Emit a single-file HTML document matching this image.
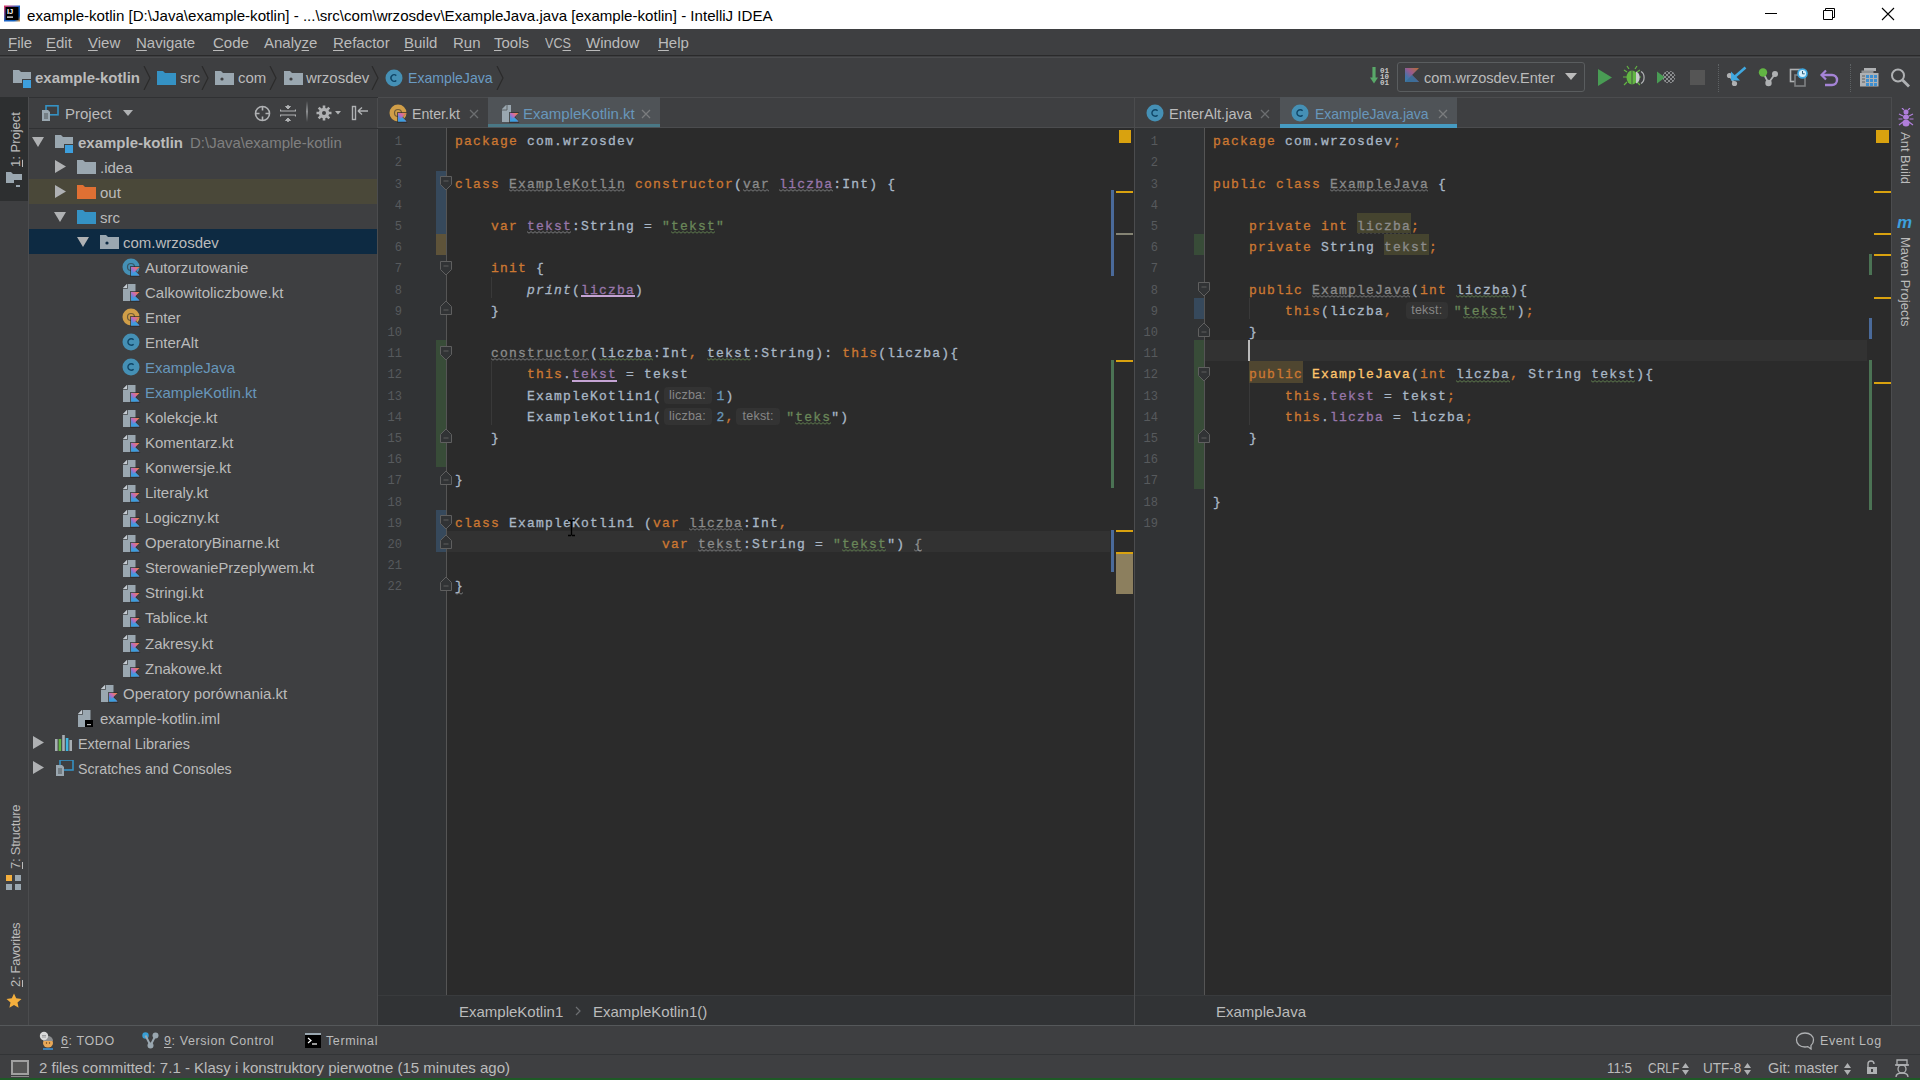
<!DOCTYPE html>
<html><head><meta charset="utf-8">
<style>
*{box-sizing:border-box;margin:0;padding:0}
html,body{width:1920px;height:1080px;overflow:hidden;background:#3E3F41;font-family:"Liberation Sans",sans-serif;font-size:15px;color:#BBBBBB}
.a{position:absolute}
.t{position:absolute;white-space:pre;line-height:15px}
u{text-decoration:underline;text-underline-offset:2px}
#title{left:0;top:0;width:1920px;height:29px;background:#fff}
#menu{left:0;top:29px;width:1920px;height:27px;background:#3E3F41;border-bottom:1px solid #2A2A2B}
.mi{top:6px;color:#BBBBBB}
#nav{left:0;top:56px;width:1920px;height:41px;background:#3E3F41;border-top:1px solid #3E3F41}
#lstrip{left:0;top:97px;width:29px;height:928px;background:#3E3F41;border-right:1px solid #4B4C4E}
#proj{left:29px;top:97px;width:349px;height:928px;background:#3E3F41;border-right:1px solid #4B4C4E}
#ed1{left:378px;top:97px;width:756px;height:928px;background:#2B2B2B}
#ed2{left:1134px;top:97px;width:757px;height:928px;background:#2B2B2B}
#rstrip{left:1891px;top:97px;width:29px;height:928px;background:#3E3F41;border-left:1px solid #4B4C4E}
#bbar{left:0;top:1025px;width:1920px;height:29px;background:#3E3F41;border-top:1px solid #55585A}
.bt{top:8px;font-size:12.5px;letter-spacing:0.6px}
#sbar{left:0;top:1054px;width:1920px;height:26px;background:#3E3F41;border-top:1px solid #323436}
.st{top:5px}
.ln{position:absolute;left:0;text-align:right;font-family:"Liberation Mono",monospace;font-size:12px;line-height:21.2px;padding-top:4px;color:#575A5D}
.cl{position:absolute;white-space:pre;font-family:"Liberation Mono",monospace;font-size:13px;letter-spacing:1.2px;line-height:21.2px;padding-top:3px;color:#A9B7C6;-webkit-text-stroke:0.3px}
.k{color:#CC7832}.d{color:#A9B7C6}.p{color:#9876AA}.s{color:#6A8759}.n{color:#6897BB}.g{color:#8C8C8C}.y{color:#FFC66D}
.it{font-style:italic}
.hint{display:inline-block;height:17px;line-height:17px;vertical-align:1px;border-radius:4px;background:#333333;color:#878787;font-family:"Liberation Sans",sans-serif;font-size:12.5px;text-align:center;letter-spacing:0.2px;-webkit-text-stroke:0}
</style></head><body>
<svg width="0" height="0" style="position:absolute"><defs><linearGradient id="kg" x1="1" y1="0" x2="0" y2="1"><stop offset="0" stop-color="#F88A2C"/><stop offset="0.45" stop-color="#C769B8"/><stop offset="0.75" stop-color="#4C8FE0"/><stop offset="1" stop-color="#3D9FDD"/></linearGradient></defs></svg>
<!-- TITLE BAR -->
<div id="title" class="a">
 <svg class="a" style="left:4px;top:5px" width="16" height="17" viewBox="0 0 16 17">
  <defs><linearGradient id="ijg" x1="0" y1="0" x2="1" y2="1"><stop offset="0" stop-color="#E8325F"/><stop offset="0.5" stop-color="#1C63C7"/><stop offset="0.8" stop-color="#0D5CB8"/><stop offset="1" stop-color="#F0962A"/></linearGradient></defs>
  <rect x="0" y="0.5" width="16" height="16" fill="url(#ijg)"/>
  <rect x="1.5" y="2" width="13" height="13" fill="#000"/>
  <text x="3" y="9" font-family="Liberation Sans" font-weight="bold" font-size="7.5" fill="#fff">IJ</text>
  <rect x="3" y="11.5" width="6" height="1.2" fill="#fff"/>
 </svg>
 <div class="t" style="left:27px;top:8px;font-size:15px;color:#000;transform-origin:0 0;transform:scaleX(1.006)">example-kotlin [D:\Java\example-kotlin] - ...\src\com\wrzosdev\ExampleJava.java [example-kotlin] - IntelliJ IDEA</div>
 <div class="a" style="left:1765px;top:13px;width:12px;height:1px;background:#000"></div>
 <svg class="a" style="left:1822px;top:7px" width="14" height="14" viewBox="0 0 14 14"><path d="M3.5 3.5V1.5h9v9h-2M1.5 3.5h9v9h-9z" fill="none" stroke="#000" stroke-width="1"/></svg>
 <svg class="a" style="left:1881px;top:7px" width="14" height="14" viewBox="0 0 14 14"><path d="M1 1L13 13M13 1L1 13" stroke="#000" stroke-width="1.1"/></svg>
</div>
<!-- MENU -->
<div id="menu" class="a">
 <div class="t mi" style="left:8px"><u>F</u>ile</div>
 <div class="t mi" style="left:46px"><u>E</u>dit</div>
 <div class="t mi" style="left:88px"><u>V</u>iew</div>
 <div class="t mi" style="left:136px"><u>N</u>avigate</div>
 <div class="t mi" style="left:213px"><u>C</u>ode</div>
 <div class="t mi" style="left:264px">Analy<u>z</u>e</div>
 <div class="t mi" style="left:333px"><u>R</u>efactor</div>
 <div class="t mi" style="left:404px"><u>B</u>uild</div>
 <div class="t mi" style="left:453px">R<u>u</u>n</div>
 <div class="t mi" style="left:494px"><u>T</u>ools</div>
 <div class="t mi" style="left:545px;transform-origin:0 0;transform:scaleX(0.84)">VC<u>S</u></div>
 <div class="t mi" style="left:586px"><u>W</u>indow</div>
 <div class="t mi" style="left:658px"><u>H</u>elp</div>
</div>
<!-- NAV BAR -->
<div id="nav" class="a">
 <div class="a" style="left:0;top:0;width:1920px;height:1px;background:#4B4C4E"></div>
 <svg class="a" style="left:13px;top:13px" width="20" height="19" viewBox="0 0 20 19"><path d="M0 0h6l2 2h10v11H0z" fill="#9AA7B0"/><rect x="9" y="9" width="9" height="9" fill="#3E3F41"/><rect x="10" y="10" width="8" height="8" fill="#3D9FDD"/></svg>
 <div class="t" style="left:35px;top:13px;font-weight:bold;color:#BBBBBB">example-kotlin</div>
 <svg class="a chev" style="left:143px;top:9px" width="8" height="24" viewBox="0 0 8 24"><path d="M1 0L7 12L1 24" fill="none" stroke="#2B2B2B" stroke-width="1.2"/></svg>
 <svg class="a" style="left:157px;top:14px" width="19" height="14" viewBox="0 0 19 14"><path d="M0 0h6l2 2h11v12H0z" fill="#3592C4"/></svg>
 <div class="t" style="left:180px;top:13px">src</div>
 <svg class="a chev" style="left:201px;top:9px" width="8" height="24" viewBox="0 0 8 24"><path d="M1 0L7 12L1 24" fill="none" stroke="#2B2B2B" stroke-width="1.2"/></svg>
 <svg class="a" style="left:215px;top:14px" width="19" height="14" viewBox="0 0 19 14"><path d="M0 0h6l2 2h11v12H0z" fill="#9AA7B0"/><circle cx="7" cy="8" r="1.6" fill="#3E3F41"/></svg>
 <div class="t" style="left:238px;top:13px">com</div>
 <svg class="a chev" style="left:269px;top:9px" width="8" height="24" viewBox="0 0 8 24"><path d="M1 0L7 12L1 24" fill="none" stroke="#2B2B2B" stroke-width="1.2"/></svg>
 <svg class="a" style="left:284px;top:14px" width="19" height="14" viewBox="0 0 19 14"><path d="M0 0h6l2 2h11v12H0z" fill="#9AA7B0"/><circle cx="7" cy="8" r="1.6" fill="#3E3F41"/></svg>
 <div class="t" style="left:306px;top:13px">wrzosdev</div>
 <svg class="a chev" style="left:371px;top:9px" width="8" height="24" viewBox="0 0 8 24"><path d="M1 0L7 12L1 24" fill="none" stroke="#2B2B2B" stroke-width="1.2"/></svg>
 <svg class="a" style="left:385px;top:12px" width="18" height="18" viewBox="0 0 18 18"><circle cx="9" cy="9" r="8.5" fill="#4590B5"/><path d="M11.3 6.6A3.2 3.2 0 1 0 11.3 11.4" fill="none" stroke="#0F4566" stroke-width="1.4"/></svg>
 <div class="t" style="left:408px;top:13px;color:#6A9BC3;transform-origin:0 0;transform:scaleX(0.94)">ExampleJava</div>
 <svg class="a chev" style="left:496px;top:9px" width="8" height="24" viewBox="0 0 8 24"><path d="M1 0L7 12L1 24" fill="none" stroke="#2B2B2B" stroke-width="1.2"/></svg>

 <!-- right toolbar -->
 <svg class="a" style="left:1370px;top:10px" width="20" height="20" viewBox="0 0 20 20"><path d="M4 0v12" stroke="#59A869" stroke-width="3.2"/><path d="M0 10.5l4 6 4-6z" fill="#59A869"/><text x="10" y="6" font-family="Liberation Mono" font-size="7.5" fill="#C8C8C8" font-weight="bold">01</text><text x="10" y="12.2" font-family="Liberation Mono" font-size="7.5" fill="#C8C8C8" font-weight="bold">10</text><text x="10" y="18.4" font-family="Liberation Mono" font-size="7.5" fill="#C8C8C8" font-weight="bold">01</text></svg>
 <div class="a" style="left:1397px;top:5px;width:188px;height:30px;border:1px solid #5A5D5F;border-radius:3px;background:#3E3F41"></div>
 <svg class="a" style="left:1405px;top:11px" width="15" height="15" viewBox="0 0 15 15"><path d="M0 0h14L7 7 14 14H0z" fill="url(#kg)" opacity=".65"/><path d="M0 14L7 7l7 7z" fill="#3A6E98" opacity=".9"/></svg>
 <div class="t" style="left:1424px;top:13px;transform-origin:0 0;transform:scaleX(0.97)">com.wrzosdev.Enter</div>
 <svg class="a" style="left:1565px;top:16px" width="12" height="8" viewBox="0 0 12 8"><path d="M0 0h12L6 7z" fill="#BBBBBB"/></svg>
 <svg class="a" style="left:1590px;top:3px" width="128" height="32" viewBox="1590 60 128 32">
 <path d="M1598 69L1612 77.5L1598 86z" fill="#499C54"/>
 <g stroke="#62B543" stroke-width="1.2" fill="none"><path d="M1627 72l-3-2M1627 77h-4M1627 82l-3 3M1637 72l3-2M1637 77h4M1637 82l3 3M1629 69l-2-3M1635 69l2-3"/></g>
 <ellipse cx="1632" cy="77.5" rx="5.5" ry="7" fill="#62B543"/>
 <path d="M1632 70.5v14" stroke="#3E3F41" stroke-width="0.8"/>
 <path d="M1636 71.5a6 6.5 0 0 1 0 12" fill="#C7CACC"/>
 <path d="M1641 71.5a5 6.5 0 0 1 0 12" fill="none" stroke="#AFB1B3" stroke-width="1.2"/>
 <path d="M1657 71.5L1665 77.5L1657 83.5z" fill="#499C54"/>
 <clipPath id="cvc"><circle cx="1669" cy="77" r="6.3"/></clipPath>
 <g clip-path="url(#cvc)" stroke="#8C8E90" stroke-width="1"><path d="M1660 68l18 18M1660 72l14 14M1660 76l10 10M1664 68l14 14M1668 68l10 10M1678 68l-18 18M1678 72l-14 14M1678 76l-10 10M1674 68l-14 14M1670 68l-10 10"/></g>
 <rect x="1690" y="70" width="15" height="15" fill="#555555"/>
</svg>
<div class="a" style="left:1718px;top:7px;width:1px;height:28px;border-left:1px dotted #5E6264"></div>
 <svg class="a" style="left:1722px;top:3px" width="126" height="32" viewBox="1722 60 126 32">
 <path d="M1729.5 75.5l5 8" stroke="#AFB1B3" stroke-width="1.6"/>
 <circle cx="1729.5" cy="75.5" r="2.6" fill="#AFB1B3"/><circle cx="1734.5" cy="83.5" r="2.6" fill="#AFB1B3"/>
 <path d="M1745.5 67.5L1734.5 77" stroke="#40A8E0" stroke-width="2.6"/>
 <path d="M1731 71.5v9h9z" fill="#40A8E0"/>
 <path d="M1763 72.5l5.5 10.5l6.5-9" stroke="#AFB1B3" stroke-width="1.8" fill="none"/>
 <circle cx="1763" cy="72.5" r="4.2" fill="#62B543"/><circle cx="1775" cy="74" r="3" fill="#AFB1B3"/><circle cx="1768.5" cy="83" r="3.2" fill="#AFB1B3"/>
 <rect x="1790.5" y="69.5" width="9.5" height="12" fill="none" stroke="#AFB1B3" stroke-width="1.6"/>
 <rect x="1795" y="75" width="10" height="11" fill="#3E3F41" stroke="#7F8183" stroke-width="1.6"/>
 <circle cx="1802.5" cy="73.5" r="5.3" fill="#40A8E0"/><circle cx="1802.5" cy="73.5" r="3.6" fill="#D6EEFA"/><path d="M1802.5 71v2.8h2.2" stroke="#2B5D7C" stroke-width="1" fill="none"/>
 <path d="M1826 70.5l-4.5 4.5 4.5 4.5" fill="none" stroke="#A584D6" stroke-width="2.2"/>
 <path d="M1822.5 75h9.5a5 5 0 0 1 0 10h-7" fill="none" stroke="#A584D6" stroke-width="2.4"/>
</svg>
<div class="a" style="left:1850px;top:7px;width:1px;height:28px;border-left:1px dotted #5E6264"></div>
 <svg class="a" style="left:1856px;top:3px" width="60" height="32" viewBox="1856 60 60 32">
 <rect x="1864" y="68" width="12" height="3" fill="#AFB1B3"/><rect x="1861.5" y="70.5" width="12" height="3" fill="#8F9193"/>
 <rect x="1860" y="73" width="18.5" height="13.5" fill="#AFB1B3"/>
 <g fill="#3D8FD1"><rect x="1866" y="75" width="3" height="3"/><rect x="1870" y="75" width="3" height="3"/><rect x="1874" y="75" width="3" height="3"/><rect x="1866" y="79" width="3" height="3"/><rect x="1870" y="79" width="3" height="3"/><rect x="1874" y="79" width="3" height="3"/><rect x="1866" y="83" width="3" height="3"/><rect x="1870" y="83" width="3" height="3"/><rect x="1874" y="83" width="3" height="3"/></g>
 <path d="M1862 76h3M1862 79h3M1862 82h3" stroke="#5E6062" stroke-width="1"/>
 <circle cx="1898" cy="75.5" r="6" fill="none" stroke="#AFB1B3" stroke-width="2"/><path d="M1902.5 80L1909 86.5" stroke="#AFB1B3" stroke-width="2.8"/>
</svg>
</div>

<div id="proj" class="a">
<div class="a" style="left:0;top:0;width:349px;height:32px;border-top:1px solid #303133;border-bottom:1px solid #303133"></div>
<svg class="a" style="left:12px;top:8px" width="18" height="16" viewBox="0 0 18 16"><rect x="5" y="0.8" width="12" height="9" fill="none" stroke="#3592C4" stroke-width="1.6"/><path d="M1 5h6l2 2v9H1z" fill="#9AA7B0"/><path d="M3 9h4M3 11h4M3 13h4" stroke="#3E3F41" stroke-width=".8"/></svg>
<div class="t" style="left:36px;top:9px">Project</div>
<svg class="a" style="left:94px;top:13px" width="10" height="7" viewBox="0 0 10 7"><path d="M0 0h10L5 6z" fill="#AFB1B3"/></svg>
<svg class="a" style="left:225px;top:8px" width="17" height="17" viewBox="0 0 17 17"><circle cx="8.5" cy="8.5" r="7" fill="none" stroke="#AFB1B3" stroke-width="1.6"/><path d="M8.5 1.5v4M8.5 11.5v4M1.5 8.5h4M11.5 8.5h4" stroke="#AFB1B3" stroke-width="1.6"/></svg>
<svg class="a" style="left:251px;top:8px" width="16" height="17" viewBox="0 0 16 17"><path d="M0.5 4.5v1.5h15V4.5M0.5 11.5V10h15v1.5" fill="none" stroke="#AFB1B3" stroke-width="1.2"/><path d="M8 0v3.5M8 17v-3.5" stroke="#AFB1B3" stroke-width="1.6"/><path d="M5.5 1.5L8 4l2.5-2.5zM5.5 15.5L8 13l2.5 2.5z" fill="#AFB1B3" stroke="#AFB1B3" stroke-width="1"/></svg>
<div class="a" style="left:277px;top:4px;width:2px;height:21px;background:linear-gradient(#3E3F41,#8C8E90,#3E3F41)"></div>
<svg class="a" style="left:287px;top:7px" width="25" height="18" viewBox="0 0 25 18"><g transform="translate(8 9)"><circle r="5.2" fill="#AFB1B3"/><g stroke="#AFB1B3" stroke-width="2.6"><path d="M0-7.5v15M-7.5 0h15M-5.3-5.3l10.6 10.6M5.3-5.3l-10.6 10.6"/></g><circle r="2" fill="#3E3F41"/></g><path d="M19 7h6l-3 3.5z" fill="#AFB1B3"/></svg>
<svg class="a" style="left:322px;top:8px" width="18" height="16" viewBox="0 0 18 16"><rect x="1.5" y="1.5" width="3" height="13" fill="none" stroke="#AFB1B3" stroke-width="1.4"/><path d="M7 6h10M7 6l4-3.5M7 6l4 3.5" fill="none" stroke="#AFB1B3" stroke-width="1.4"/></svg>
<svg class="a" style="left:3px;top:40.0px" width="12" height="10" viewBox="0 0 12 10"><path d="M0 0h12L6 10z" fill="#AFB1B3"/></svg>
<svg class="a" style="left:26px;top:38.0px" width="20" height="19" viewBox="0 0 20 19"><path d="M0 0h6l2 2h10v11H0z" fill="#9AA7B0"/><rect x="9" y="9" width="9" height="9" fill="#3E3F41"/><rect x="10" y="10" width="8" height="8" fill="#3D9FDD"/></svg>
<div class="t" style="left:49px;top:37.50px;font-weight:bold;color:#BBBBBB">example-kotlin</div>
<div class="t" style="left:161px;top:37.50px;color:#808080">D:\Java\example-kotlin</div>
<svg class="a" style="left:26px;top:62.55px" width="11" height="13" viewBox="0 0 11 13"><path d="M0 0L11 6.5L0 13z" fill="#AFB1B3"/></svg>
<svg class="a" style="left:48px;top:63.05000000000001px" width="19" height="14" viewBox="0 0 19 14"><path d="M0 0h6l2 2h11v12H0z" fill="#9AA7B0"/></svg>
<div class="t" style="left:71px;top:62.55px;color:#BBBBBB">.idea</div>
<div class="a" style="left:0;top:82.1px;width:348px;height:25px;background:#4A4839"></div>
<svg class="a" style="left:26px;top:87.60px" width="11" height="13" viewBox="0 0 11 13"><path d="M0 0L11 6.5L0 13z" fill="#AFB1B3"/></svg>
<svg class="a" style="left:48px;top:88.1px" width="19" height="14" viewBox="0 0 19 14"><path d="M0 0h6l2 2h11v12H0z" fill="#E07033"/></svg>
<div class="t" style="left:71px;top:87.60px;color:#BBBBBB">out</div>
<svg class="a" style="left:25px;top:115.15px" width="12" height="10" viewBox="0 0 12 10"><path d="M0 0h12L6 10z" fill="#AFB1B3"/></svg>
<svg class="a" style="left:48px;top:113.15px" width="19" height="14" viewBox="0 0 19 14"><path d="M0 0h6l2 2h11v12H0z" fill="#3592C4"/></svg>
<div class="t" style="left:71px;top:112.65px;color:#BBBBBB">src</div>
<div class="a" style="left:0;top:132.2px;width:348px;height:25px;background:#0D2A42"></div>
<svg class="a" style="left:48px;top:140.2px" width="12" height="10" viewBox="0 0 12 10"><path d="M0 0h12L6 10z" fill="#AFB1B3"/></svg>
<svg class="a" style="left:71px;top:138.2px" width="19" height="14" viewBox="0 0 19 14"><path d="M0 0h6l2 2h11v12H0z" fill="#9AA7B0"/><circle cx="7" cy="8" r="1.6" fill="#0D2A42"/></svg>
<div class="t" style="left:94px;top:137.70px;color:#BBBBBB">com.wrzosdev</div>
<svg class="a" style="left:93px;top:161.25px" width="19" height="19" viewBox="0 0 19 19"><circle cx="9" cy="9" r="8.5" fill="#4590B5"/><circle cx="9" cy="9" r="3.5" fill="none" stroke="#2E2E2E" stroke-width="1.2" opacity=".6"/><path d="M8 8h10.5L14 12.5 18.5 19H8z" fill="#2B2B2B" opacity=".7"/><path d="M9 9h8.5l-4.3 4.2 4.3 4.3H9z" fill="url(#kg)"/><path d="M9 17.5l4.2-4.3 4.3 4.3z" fill="#3D9FDD"/></svg>
<div class="t" style="left:116px;top:162.75px;color:#BBBBBB">Autorzutowanie</div>
<svg class="a" style="left:93px;top:186.3px" width="19" height="19" viewBox="0 0 19 19"><path d="M1 5L5 1h8.5v17H1z" fill="#9AA7B0"/><path d="M1 5L5 1v4z" fill="#C5CCD2"/><path d="M1 5.5h4.5V1" fill="none" stroke="#3E3F41" stroke-width="0.7"/><path d="M8 8h10.5L14 12.5 18.5 19H8z" fill="#2B2B2B" opacity=".7"/><path d="M9 9h8.5l-4.3 4.2 4.3 4.3H9z" fill="url(#kg)"/><path d="M9 17.5l4.2-4.3 4.3 4.3z" fill="#3D9FDD"/></svg>
<div class="t" style="left:116px;top:187.80px;color:#BBBBBB">Calkowitoliczbowe.kt</div>
<svg class="a" style="left:93px;top:211.35000000000002px" width="19" height="19" viewBox="0 0 19 19"><circle cx="9" cy="9" r="8.5" fill="#D09E48"/><circle cx="9" cy="9" r="3.5" fill="none" stroke="#2E2E2E" stroke-width="1.2" opacity=".6"/><path d="M8 8h10.5L14 12.5 18.5 19H8z" fill="#2B2B2B" opacity=".7"/><path d="M9 9h8.5l-4.3 4.2 4.3 4.3H9z" fill="url(#kg)"/><path d="M9 17.5l4.2-4.3 4.3 4.3z" fill="#3D9FDD"/></svg>
<div class="t" style="left:116px;top:212.85px;color:#BBBBBB">Enter</div>
<svg class="a" style="left:93px;top:236.39999999999998px" width="19" height="19" viewBox="0 0 19 19"><circle cx="9" cy="9" r="8.5" fill="#4590B5"/><path d="M11.6 6.7A3.3 3.3 0 1 0 11.6 11.3" fill="none" stroke="#0F4566" stroke-width="1.4"/></svg>
<div class="t" style="left:116px;top:237.90px;color:#BBBBBB">EnterAlt</div>
<svg class="a" style="left:93px;top:261.45000000000005px" width="19" height="19" viewBox="0 0 19 19"><circle cx="9" cy="9" r="8.5" fill="#4590B5"/><path d="M11.6 6.7A3.3 3.3 0 1 0 11.6 11.3" fill="none" stroke="#0F4566" stroke-width="1.4"/></svg>
<div class="t" style="left:116px;top:262.95px;color:#6897BB">ExampleJava</div>
<svg class="a" style="left:93px;top:286.5px" width="19" height="19" viewBox="0 0 19 19"><path d="M1 5L5 1h8.5v17H1z" fill="#9AA7B0"/><path d="M1 5L5 1v4z" fill="#C5CCD2"/><path d="M1 5.5h4.5V1" fill="none" stroke="#3E3F41" stroke-width="0.7"/><path d="M8 8h10.5L14 12.5 18.5 19H8z" fill="#2B2B2B" opacity=".7"/><path d="M9 9h8.5l-4.3 4.2 4.3 4.3H9z" fill="url(#kg)"/><path d="M9 17.5l4.2-4.3 4.3 4.3z" fill="#3D9FDD"/></svg>
<div class="t" style="left:116px;top:288.00px;color:#6897BB">ExampleKotlin.kt</div>
<svg class="a" style="left:93px;top:311.55px" width="19" height="19" viewBox="0 0 19 19"><path d="M1 5L5 1h8.5v17H1z" fill="#9AA7B0"/><path d="M1 5L5 1v4z" fill="#C5CCD2"/><path d="M1 5.5h4.5V1" fill="none" stroke="#3E3F41" stroke-width="0.7"/><path d="M8 8h10.5L14 12.5 18.5 19H8z" fill="#2B2B2B" opacity=".7"/><path d="M9 9h8.5l-4.3 4.2 4.3 4.3H9z" fill="url(#kg)"/><path d="M9 17.5l4.2-4.3 4.3 4.3z" fill="#3D9FDD"/></svg>
<div class="t" style="left:116px;top:313.05px;color:#BBBBBB">Kolekcje.kt</div>
<svg class="a" style="left:93px;top:336.6px" width="19" height="19" viewBox="0 0 19 19"><path d="M1 5L5 1h8.5v17H1z" fill="#9AA7B0"/><path d="M1 5L5 1v4z" fill="#C5CCD2"/><path d="M1 5.5h4.5V1" fill="none" stroke="#3E3F41" stroke-width="0.7"/><path d="M8 8h10.5L14 12.5 18.5 19H8z" fill="#2B2B2B" opacity=".7"/><path d="M9 9h8.5l-4.3 4.2 4.3 4.3H9z" fill="url(#kg)"/><path d="M9 17.5l4.2-4.3 4.3 4.3z" fill="#3D9FDD"/></svg>
<div class="t" style="left:116px;top:338.10px;color:#BBBBBB">Komentarz.kt</div>
<svg class="a" style="left:93px;top:361.65000000000003px" width="19" height="19" viewBox="0 0 19 19"><path d="M1 5L5 1h8.5v17H1z" fill="#9AA7B0"/><path d="M1 5L5 1v4z" fill="#C5CCD2"/><path d="M1 5.5h4.5V1" fill="none" stroke="#3E3F41" stroke-width="0.7"/><path d="M8 8h10.5L14 12.5 18.5 19H8z" fill="#2B2B2B" opacity=".7"/><path d="M9 9h8.5l-4.3 4.2 4.3 4.3H9z" fill="url(#kg)"/><path d="M9 17.5l4.2-4.3 4.3 4.3z" fill="#3D9FDD"/></svg>
<div class="t" style="left:116px;top:363.15px;color:#BBBBBB">Konwersje.kt</div>
<svg class="a" style="left:93px;top:386.7px" width="19" height="19" viewBox="0 0 19 19"><path d="M1 5L5 1h8.5v17H1z" fill="#9AA7B0"/><path d="M1 5L5 1v4z" fill="#C5CCD2"/><path d="M1 5.5h4.5V1" fill="none" stroke="#3E3F41" stroke-width="0.7"/><path d="M8 8h10.5L14 12.5 18.5 19H8z" fill="#2B2B2B" opacity=".7"/><path d="M9 9h8.5l-4.3 4.2 4.3 4.3H9z" fill="url(#kg)"/><path d="M9 17.5l4.2-4.3 4.3 4.3z" fill="#3D9FDD"/></svg>
<div class="t" style="left:116px;top:388.20px;color:#BBBBBB">Literaly.kt</div>
<svg class="a" style="left:93px;top:411.75px" width="19" height="19" viewBox="0 0 19 19"><path d="M1 5L5 1h8.5v17H1z" fill="#9AA7B0"/><path d="M1 5L5 1v4z" fill="#C5CCD2"/><path d="M1 5.5h4.5V1" fill="none" stroke="#3E3F41" stroke-width="0.7"/><path d="M8 8h10.5L14 12.5 18.5 19H8z" fill="#2B2B2B" opacity=".7"/><path d="M9 9h8.5l-4.3 4.2 4.3 4.3H9z" fill="url(#kg)"/><path d="M9 17.5l4.2-4.3 4.3 4.3z" fill="#3D9FDD"/></svg>
<div class="t" style="left:116px;top:413.25px;color:#BBBBBB">Logiczny.kt</div>
<svg class="a" style="left:93px;top:436.79999999999995px" width="19" height="19" viewBox="0 0 19 19"><path d="M1 5L5 1h8.5v17H1z" fill="#9AA7B0"/><path d="M1 5L5 1v4z" fill="#C5CCD2"/><path d="M1 5.5h4.5V1" fill="none" stroke="#3E3F41" stroke-width="0.7"/><path d="M8 8h10.5L14 12.5 18.5 19H8z" fill="#2B2B2B" opacity=".7"/><path d="M9 9h8.5l-4.3 4.2 4.3 4.3H9z" fill="url(#kg)"/><path d="M9 17.5l4.2-4.3 4.3 4.3z" fill="#3D9FDD"/></svg>
<div class="t" style="left:116px;top:438.30px;color:#BBBBBB">OperatoryBinarne.kt</div>
<svg class="a" style="left:93px;top:461.85px" width="19" height="19" viewBox="0 0 19 19"><path d="M1 5L5 1h8.5v17H1z" fill="#9AA7B0"/><path d="M1 5L5 1v4z" fill="#C5CCD2"/><path d="M1 5.5h4.5V1" fill="none" stroke="#3E3F41" stroke-width="0.7"/><path d="M8 8h10.5L14 12.5 18.5 19H8z" fill="#2B2B2B" opacity=".7"/><path d="M9 9h8.5l-4.3 4.2 4.3 4.3H9z" fill="url(#kg)"/><path d="M9 17.5l4.2-4.3 4.3 4.3z" fill="#3D9FDD"/></svg>
<div class="t" style="left:116px;top:463.35px;color:#BBBBBB;transform-origin:0 0;transform:scaleX(0.98)">SterowaniePrzeplywem.kt</div>
<svg class="a" style="left:93px;top:486.9000000000001px" width="19" height="19" viewBox="0 0 19 19"><path d="M1 5L5 1h8.5v17H1z" fill="#9AA7B0"/><path d="M1 5L5 1v4z" fill="#C5CCD2"/><path d="M1 5.5h4.5V1" fill="none" stroke="#3E3F41" stroke-width="0.7"/><path d="M8 8h10.5L14 12.5 18.5 19H8z" fill="#2B2B2B" opacity=".7"/><path d="M9 9h8.5l-4.3 4.2 4.3 4.3H9z" fill="url(#kg)"/><path d="M9 17.5l4.2-4.3 4.3 4.3z" fill="#3D9FDD"/></svg>
<div class="t" style="left:116px;top:488.40px;color:#BBBBBB">Stringi.kt</div>
<svg class="a" style="left:93px;top:511.95000000000005px" width="19" height="19" viewBox="0 0 19 19"><path d="M1 5L5 1h8.5v17H1z" fill="#9AA7B0"/><path d="M1 5L5 1v4z" fill="#C5CCD2"/><path d="M1 5.5h4.5V1" fill="none" stroke="#3E3F41" stroke-width="0.7"/><path d="M8 8h10.5L14 12.5 18.5 19H8z" fill="#2B2B2B" opacity=".7"/><path d="M9 9h8.5l-4.3 4.2 4.3 4.3H9z" fill="url(#kg)"/><path d="M9 17.5l4.2-4.3 4.3 4.3z" fill="#3D9FDD"/></svg>
<div class="t" style="left:116px;top:513.45px;color:#BBBBBB">Tablice.kt</div>
<svg class="a" style="left:93px;top:537.0px" width="19" height="19" viewBox="0 0 19 19"><path d="M1 5L5 1h8.5v17H1z" fill="#9AA7B0"/><path d="M1 5L5 1v4z" fill="#C5CCD2"/><path d="M1 5.5h4.5V1" fill="none" stroke="#3E3F41" stroke-width="0.7"/><path d="M8 8h10.5L14 12.5 18.5 19H8z" fill="#2B2B2B" opacity=".7"/><path d="M9 9h8.5l-4.3 4.2 4.3 4.3H9z" fill="url(#kg)"/><path d="M9 17.5l4.2-4.3 4.3 4.3z" fill="#3D9FDD"/></svg>
<div class="t" style="left:116px;top:538.50px;color:#BBBBBB">Zakresy.kt</div>
<svg class="a" style="left:93px;top:562.0500000000001px" width="19" height="19" viewBox="0 0 19 19"><path d="M1 5L5 1h8.5v17H1z" fill="#9AA7B0"/><path d="M1 5L5 1v4z" fill="#C5CCD2"/><path d="M1 5.5h4.5V1" fill="none" stroke="#3E3F41" stroke-width="0.7"/><path d="M8 8h10.5L14 12.5 18.5 19H8z" fill="#2B2B2B" opacity=".7"/><path d="M9 9h8.5l-4.3 4.2 4.3 4.3H9z" fill="url(#kg)"/><path d="M9 17.5l4.2-4.3 4.3 4.3z" fill="#3D9FDD"/></svg>
<div class="t" style="left:116px;top:563.55px;color:#BBBBBB">Znakowe.kt</div>
<svg class="a" style="left:71px;top:587.1px" width="19" height="19" viewBox="0 0 19 19"><path d="M1 5L5 1h8.5v17H1z" fill="#9AA7B0"/><path d="M1 5L5 1v4z" fill="#C5CCD2"/><path d="M1 5.5h4.5V1" fill="none" stroke="#3E3F41" stroke-width="0.7"/><path d="M8 8h10.5L14 12.5 18.5 19H8z" fill="#2B2B2B" opacity=".7"/><path d="M9 9h8.5l-4.3 4.2 4.3 4.3H9z" fill="url(#kg)"/><path d="M9 17.5l4.2-4.3 4.3 4.3z" fill="#3D9FDD"/></svg>
<div class="t" style="left:94px;top:588.60px;color:#BBBBBB">Operatory porównania.kt</div>
<svg class="a" style="left:48px;top:612.15px" width="19" height="19" viewBox="0 0 19 19"><path d="M1 5L5 1h8.5v17H1z" fill="#9AA7B0"/><path d="M1 5L5 1v4z" fill="#C5CCD2"/><path d="M1 5.5h4.5V1" fill="none" stroke="#3E3F41" stroke-width="0.7"/><rect x="8" y="11" width="8" height="7" fill="#000"/><rect x="10" y="15" width="4" height="1.2" fill="#BBB"/></svg>
<div class="t" style="left:71px;top:613.65px;color:#BBBBBB">example-kotlin.iml</div>
<svg class="a" style="left:4px;top:638.70px" width="11" height="13" viewBox="0 0 11 13"><path d="M0 0L11 6.5L0 13z" fill="#AFB1B3"/></svg>
<svg class="a" style="left:26px;top:638.2px" width="19" height="16" viewBox="0 0 19 16"><rect x="0" y="4" width="2.6" height="12" fill="#A7AEB3"/><rect x="3.6" y="4" width="2.6" height="12" fill="#62B543"/><rect x="7.2" y="0" width="2.6" height="16" fill="#A7AEB3"/><rect x="10.8" y="3" width="2.6" height="13" fill="#40B6E0"/><rect x="14.4" y="5" width="2.6" height="11" fill="#A7AEB3"/></svg>
<div class="t" style="left:49px;top:638.70px;color:#BBBBBB;transform-origin:0 0;transform:scaleX(0.96)">External Libraries</div>
<svg class="a" style="left:4px;top:663.75px" width="11" height="13" viewBox="0 0 11 13"><path d="M0 0L11 6.5L0 13z" fill="#AFB1B3"/></svg>
<svg class="a" style="left:26px;top:663.25px" width="19" height="16" viewBox="0 0 19 16"><rect x="5" y="0" width="13" height="10" fill="none" stroke="#3592C4" stroke-width="1.6"/><path d="M1 5h6l2 2v9H1z" fill="#9AA7B0"/><path d="M3 9h4M3 11h4M3 13h4" stroke="#3E3F41" stroke-width=".8"/></svg>
<div class="t" style="left:49px;top:663.75px;color:#BBBBBB;transform-origin:0 0;transform:scaleX(0.945)">Scratches and Consoles</div>
</div>
<div id="lstrip" class="a">
<div class="a" style="left:0;top:0;width:28px;height:104px;background:#2D2F30"></div>
<div class="t" style="left:8px;top:70px;transform-origin:0 0;transform:rotate(-90deg);font-size:13px;color:#BBBBBB"><u>1</u>: Project</div>
<svg class="a" style="left:6px;top:75px" width="16" height="16" viewBox="0 0 16 16"><path d="M0 0h5l2 2h9v9H0z" fill="#9AA7B0"/><rect x="8" y="8" width="8" height="8" fill="#2D2F30"/><rect x="10" y="13" width="4" height="2" fill="#9AA7B0"/></svg>
<div class="t" style="left:8px;top:772px;transform-origin:0 0;transform:rotate(-90deg);font-size:13px;letter-spacing:-0.25px;color:#BBBBBB"><u>7</u>: Structure</div>
<svg class="a" style="left:6px;top:778px" width="16" height="15" viewBox="0 0 16 15"><rect x="0" y="0" width="6" height="6" fill="#F4AF3D"/><rect x="9" y="0" width="6" height="6" fill="#9AA7B0"/><rect x="0" y="9" width="6" height="6" fill="#9AA7B0"/><rect x="9" y="9" width="6" height="6" fill="#9AA7B0"/></svg>
<div class="t" style="left:8px;top:890px;transform-origin:0 0;transform:rotate(-90deg);font-size:13px;letter-spacing:-0.3px;color:#BBBBBB"><u>2</u>: Favorites</div>
<svg class="a" style="left:6px;top:896px" width="16" height="16" viewBox="0 0 16 16"><path d="M8 0.5l2.2 4.8 5.3.6-4 3.6 1.1 5.2L8 12l-4.6 2.7 1.1-5.2-4-3.6 5.3-.6z" fill="#F4AF3D"/></svg>
</div>
<div id="ed1" class="a">
<div class="a" style="left:0;top:0;width:756px;height:31px;background:#3E3F41;border-top:1px solid #4B4C4E;border-bottom:1px solid #4B4C4E"></div>
<div class="a" style="left:0;top:31px;width:68px;height:867px;background:#313335"></div>
<div class="a" style="left:68px;top:434.0px;width:664px;height:21.2px;background:#323232"></div>
<div class="a" style="left:68px;top:31px;width:1px;height:867px;background:#555555"></div>
<div class="a" style="left:58px;top:73.6px;width:10px;height:63.6px;background:#36495C"></div>
<div class="a" style="left:58px;top:137.2px;width:10px;height:21.2px;background:#5E5339"></div>
<div class="a" style="left:58px;top:243.2px;width:10px;height:127.2px;background:#384C38"></div>
<div class="a" style="left:58px;top:412.8px;width:10px;height:42.4px;background:#36495C"></div>
<div class="ln" style="top:31.2px;width:24px">1</div>
<div class="ln" style="top:52.4px;width:24px">2</div>
<div class="ln" style="top:73.6px;width:24px">3</div>
<div class="ln" style="top:94.8px;width:24px">4</div>
<div class="ln" style="top:116.0px;width:24px">5</div>
<div class="ln" style="top:137.2px;width:24px">6</div>
<div class="ln" style="top:158.4px;width:24px">7</div>
<div class="ln" style="top:179.6px;width:24px">8</div>
<div class="ln" style="top:200.8px;width:24px">9</div>
<div class="ln" style="top:222.0px;width:24px">10</div>
<div class="ln" style="top:243.2px;width:24px">11</div>
<div class="ln" style="top:264.4px;width:24px">12</div>
<div class="ln" style="top:285.6px;width:24px">13</div>
<div class="ln" style="top:306.8px;width:24px">14</div>
<div class="ln" style="top:328.0px;width:24px">15</div>
<div class="ln" style="top:349.2px;width:24px">16</div>
<div class="ln" style="top:370.4px;width:24px">17</div>
<div class="ln" style="top:391.6px;width:24px">18</div>
<div class="ln" style="top:412.8px;width:24px">19</div>
<div class="ln" style="top:434.0px;width:24px">20</div>
<div class="ln" style="top:455.2px;width:24px">21</div>
<div class="ln" style="top:476.4px;width:24px">22</div>
<div class="a" style="left:113px;top:179.6px;width:1px;height:21.2px;background:#393939"></div>
<div class="a" style="left:113px;top:264.4px;width:1px;height:63.6px;background:#393939"></div>
<svg class="a" style="left:62px;top:79.1px" width="12" height="15" viewBox="0 0 12 15"><path d="M0.5 0.5h11v8l-5.5 5.5-5.5-5.5z" fill="#313335" stroke="#5F5F5F" stroke-width="1"/><path d="M3.5 5h5" stroke="#5F5F5F" stroke-width="1"/></svg>
<svg class="a" style="left:62px;top:163.9px" width="12" height="15" viewBox="0 0 12 15"><path d="M0.5 0.5h11v8l-5.5 5.5-5.5-5.5z" fill="#313335" stroke="#5F5F5F" stroke-width="1"/><path d="M3.5 5h5" stroke="#5F5F5F" stroke-width="1"/></svg>
<svg class="a" style="left:62px;top:203.3px" width="12" height="15" viewBox="0 0 12 15"><path d="M0.5 14.5h11v-8l-5.5-5.5-5.5 5.5z" fill="#313335" stroke="#5F5F5F" stroke-width="1"/><path d="M3.5 10h5" stroke="#5F5F5F" stroke-width="1"/></svg>
<svg class="a" style="left:62px;top:248.7px" width="12" height="15" viewBox="0 0 12 15"><path d="M0.5 0.5h11v8l-5.5 5.5-5.5-5.5z" fill="#313335" stroke="#5F5F5F" stroke-width="1"/><path d="M3.5 5h5" stroke="#5F5F5F" stroke-width="1"/></svg>
<svg class="a" style="left:62px;top:330.5px" width="12" height="15" viewBox="0 0 12 15"><path d="M0.5 14.5h11v-8l-5.5-5.5-5.5 5.5z" fill="#313335" stroke="#5F5F5F" stroke-width="1"/><path d="M3.5 10h5" stroke="#5F5F5F" stroke-width="1"/></svg>
<svg class="a" style="left:62px;top:372.9px" width="12" height="15" viewBox="0 0 12 15"><path d="M0.5 14.5h11v-8l-5.5-5.5-5.5 5.5z" fill="#313335" stroke="#5F5F5F" stroke-width="1"/><path d="M3.5 10h5" stroke="#5F5F5F" stroke-width="1"/></svg>
<svg class="a" style="left:62px;top:418.3px" width="12" height="15" viewBox="0 0 12 15"><path d="M0.5 0.5h11v8l-5.5 5.5-5.5-5.5z" fill="#313335" stroke="#5F5F5F" stroke-width="1"/><path d="M3.5 5h5" stroke="#5F5F5F" stroke-width="1"/></svg>
<svg class="a" style="left:62px;top:436.5px" width="12" height="15" viewBox="0 0 12 15"><path d="M0.5 14.5h11v-8l-5.5-5.5-5.5 5.5z" fill="#313335" stroke="#5F5F5F" stroke-width="1"/><path d="M3.5 10h5" stroke="#5F5F5F" stroke-width="1"/></svg>
<svg class="a" style="left:62px;top:478.9px" width="12" height="15" viewBox="0 0 12 15"><path d="M0.5 14.5h11v-8l-5.5-5.5-5.5 5.5z" fill="#313335" stroke="#5F5F5F" stroke-width="1"/><path d="M3.5 10h5" stroke="#5F5F5F" stroke-width="1"/></svg>
<svg class="a" style="left:131px;top:91.8px" width="118" height="3" viewBox="0 0 118 3"><polyline points="0,0 2,1.6 4,0 6,1.6 8,0 10,1.6 12,0 14,1.6 16,0 18,1.6 20,0 22,1.6 24,0 26,1.6 28,0 30,1.6 32,0 34,1.6 36,0 38,1.6 40,0 42,1.6 44,0 46,1.6 48,0 50,1.6 52,0 54,1.6 56,0 58,1.6 60,0 62,1.6 64,0 66,1.6 68,0 70,1.6 72,0 74,1.6 76,0 78,1.6 80,0 82,1.6 84,0 86,1.6 88,0 90,1.6 92,0 94,1.6 96,0 98,1.6 100,0 102,1.6 104,0 106,1.6 108,0 110,1.6 112,0 114,1.6 116,0" transform="translate(0 .6)" fill="none" stroke="#77787A" stroke-width="1"/></svg>
<svg class="a" style="left:365px;top:91.8px" width="28" height="3" viewBox="0 0 28 3"><polyline points="0,0 2,1.6 4,0 6,1.6 8,0 10,1.6 12,0 14,1.6 16,0 18,1.6 20,0 22,1.6 24,0 26,1.6" transform="translate(0 .6)" fill="none" stroke="#77787A" stroke-width="1"/></svg>
<svg class="a" style="left:401px;top:91.8px" width="55" height="3" viewBox="0 0 55 3"><polyline points="0,0 2,1.6 4,0 6,1.6 8,0 10,1.6 12,0 14,1.6 16,0 18,1.6 20,0 22,1.6 24,0 26,1.6 28,0 30,1.6 32,0 34,1.6 36,0 38,1.6 40,0 42,1.6 44,0 46,1.6 48,0 50,1.6 52,0 54,1.6" transform="translate(0 .6)" fill="none" stroke="#77787A" stroke-width="1"/></svg>
<svg class="a" style="left:149px;top:134.2px" width="46" height="3" viewBox="0 0 46 3"><polyline points="0,0 2,1.6 4,0 6,1.6 8,0 10,1.6 12,0 14,1.6 16,0 18,1.6 20,0 22,1.6 24,0 26,1.6 28,0 30,1.6 32,0 34,1.6 36,0 38,1.6 40,0 42,1.6 44,0" transform="translate(0 .6)" fill="none" stroke="#77787A" stroke-width="1"/></svg>
<svg class="a" style="left:293px;top:134.2px" width="46" height="3" viewBox="0 0 46 3"><polyline points="0,0 2,1.6 4,0 6,1.6 8,0 10,1.6 12,0 14,1.6 16,0 18,1.6 20,0 22,1.6 24,0 26,1.6 28,0 30,1.6 32,0 34,1.6 36,0 38,1.6 40,0 42,1.6 44,0" transform="translate(0 .6)" fill="none" stroke="#5E7A4E" stroke-width="1"/></svg>
<div class="a" style="left:203px;top:198.2px;width:54px;height:2px;background:#C5A4D4"></div>
<svg class="a" style="left:113px;top:261.4px" width="100" height="3" viewBox="0 0 100 3"><polyline points="0,0 2,1.6 4,0 6,1.6 8,0 10,1.6 12,0 14,1.6 16,0 18,1.6 20,0 22,1.6 24,0 26,1.6 28,0 30,1.6 32,0 34,1.6 36,0 38,1.6 40,0 42,1.6 44,0 46,1.6 48,0 50,1.6 52,0 54,1.6 56,0 58,1.6 60,0 62,1.6 64,0 66,1.6 68,0 70,1.6 72,0 74,1.6 76,0 78,1.6 80,0 82,1.6 84,0 86,1.6 88,0 90,1.6 92,0 94,1.6 96,0 98,1.6" transform="translate(0 .6)" fill="none" stroke="#77787A" stroke-width="1"/></svg>
<svg class="a" style="left:221px;top:261.4px" width="55" height="3" viewBox="0 0 55 3"><polyline points="0,0 2,1.6 4,0 6,1.6 8,0 10,1.6 12,0 14,1.6 16,0 18,1.6 20,0 22,1.6 24,0 26,1.6 28,0 30,1.6 32,0 34,1.6 36,0 38,1.6 40,0 42,1.6 44,0 46,1.6 48,0 50,1.6 52,0 54,1.6" transform="translate(0 .6)" fill="none" stroke="#5E7A4E" stroke-width="1"/></svg>
<svg class="a" style="left:329px;top:261.4px" width="46" height="3" viewBox="0 0 46 3"><polyline points="0,0 2,1.6 4,0 6,1.6 8,0 10,1.6 12,0 14,1.6 16,0 18,1.6 20,0 22,1.6 24,0 26,1.6 28,0 30,1.6 32,0 34,1.6 36,0 38,1.6 40,0 42,1.6 44,0" transform="translate(0 .6)" fill="none" stroke="#5E7A4E" stroke-width="1"/></svg>
<div class="a" style="left:194px;top:283.0px;width:45px;height:2px;background:#C5A4D4"></div>
<svg class="a" style="left:417.1px;top:325.0px" width="37" height="3" viewBox="0 0 37 3"><polyline points="0,0 2,1.6 4,0 6,1.6 8,0 10,1.6 12,0 14,1.6 16,0 18,1.6 20,0 22,1.6 24,0 26,1.6 28,0 30,1.6 32,0 34,1.6 36,0" transform="translate(0 .6)" fill="none" stroke="#5E7A4E" stroke-width="1"/></svg>
<svg class="a" style="left:311px;top:431.0px" width="55" height="3" viewBox="0 0 55 3"><polyline points="0,0 2,1.6 4,0 6,1.6 8,0 10,1.6 12,0 14,1.6 16,0 18,1.6 20,0 22,1.6 24,0 26,1.6 28,0 30,1.6 32,0 34,1.6 36,0 38,1.6 40,0 42,1.6 44,0 46,1.6 48,0 50,1.6 52,0 54,1.6" transform="translate(0 .6)" fill="none" stroke="#77787A" stroke-width="1"/></svg>
<svg class="a" style="left:320px;top:452.2px" width="46" height="3" viewBox="0 0 46 3"><polyline points="0,0 2,1.6 4,0 6,1.6 8,0 10,1.6 12,0 14,1.6 16,0 18,1.6 20,0 22,1.6 24,0 26,1.6 28,0 30,1.6 32,0 34,1.6 36,0 38,1.6 40,0 42,1.6 44,0" transform="translate(0 .6)" fill="none" stroke="#77787A" stroke-width="1"/></svg>
<svg class="a" style="left:464px;top:452.2px" width="46" height="3" viewBox="0 0 46 3"><polyline points="0,0 2,1.6 4,0 6,1.6 8,0 10,1.6 12,0 14,1.6 16,0 18,1.6 20,0 22,1.6 24,0 26,1.6 28,0 30,1.6 32,0 34,1.6 36,0 38,1.6 40,0 42,1.6 44,0" transform="translate(0 .6)" fill="none" stroke="#5E7A4E" stroke-width="1"/></svg>
<svg class="a" style="left:536px;top:452.2px" width="10" height="3" viewBox="0 0 10 3"><polyline points="0,0 2,1.6 4,0 6,1.6 8,0" transform="translate(0 .6)" fill="none" stroke="#77787A" stroke-width="1"/></svg>
<svg class="a" style="left:77px;top:494.6px" width="10" height="3" viewBox="0 0 10 3"><polyline points="0,0 2,1.6 4,0 6,1.6 8,0" transform="translate(0 .6)" fill="none" stroke="#77787A" stroke-width="1"/></svg>
<div class="cl" style="left:77px;top:31.2px"><span class="k">package</span><span class="d"> com.wrzosdev</span></div>
<div class="cl" style="left:77px;top:73.6px"><span class="k">class</span><span class="d"> </span><span class="g">ExampleKotlin</span><span class="d"> </span><span class="k">constructor</span><span class="d">(</span><span class="g">var</span><span class="d"> </span><span class="p">liczba</span><span class="d">:Int) {</span></div>
<div class="cl" style="left:77px;top:116.0px"><span class="d">    </span><span class="k">var</span><span class="d"> </span><span class="p">tekst</span><span class="d">:String = </span><span class="s">"</span><span class="s">tekst</span><span class="s">"</span></div>
<div class="cl" style="left:77px;top:158.4px"><span class="d">    </span><span class="k">init</span><span class="d"> {</span></div>
<div class="cl" style="left:77px;top:179.6px"><span class="d">        </span><span class="d it">print</span><span class="d">(</span><span class="p">liczba</span><span class="d">)</span></div>
<div class="cl" style="left:77px;top:200.8px"><span class="d">    }</span></div>
<div class="cl" style="left:77px;top:243.2px"><span class="d">    </span><span class="g">constructor</span><span class="d">(</span><span class="d">liczba</span><span class="d">:Int</span><span class="k">,</span><span class="d"> </span><span class="d">tekst</span><span class="d">:String): </span><span class="k">this</span><span class="d">(liczba){</span></div>
<div class="cl" style="left:77px;top:264.4px"><span class="d">        </span><span class="k">this</span><span class="d">.</span><span class="p">tekst</span><span class="d"> = tekst</span></div>
<div class="cl" style="left:77px;top:285.6px"><span class="d">        ExampleKotlin1(</span><span class="hint" style="margin-left:1.5px;margin-right:5px;width:48px">liczba:</span><span class="n">1</span><span class="d">)</span></div>
<div class="cl" style="left:77px;top:306.8px"><span class="d">        ExampleKotlin1(</span><span class="hint" style="margin-left:1.5px;margin-right:5px;width:48px">liczba:</span><span class="n">2</span><span class="k">,</span><span class="hint" style="margin-left:1.6px;margin-right:6px;width:44px">tekst:</span><span class="s">"</span><span class="s">teks</span><span class="d">")</span></div>
<div class="cl" style="left:77px;top:328.0px"><span class="d">    }</span></div>
<div class="cl" style="left:77px;top:370.4px"><span class="d">}</span></div>
<div class="cl" style="left:77px;top:412.8px"><span class="k">class</span><span class="d"> ExampleKotlin1 (</span><span class="k">var</span><span class="d"> </span><span class="g">liczba</span><span class="d">:Int</span><span class="k">,</span></div>
<div class="cl" style="left:77px;top:434.0px"><span class="d">                       </span><span class="k">var</span><span class="d"> </span><span class="g">tekst</span><span class="d">:String = </span><span class="s">"</span><span class="s">tekst</span><span class="d">") </span><span class="g">{</span></div>
<div class="cl" style="left:77px;top:476.4px"><span class="d">}</span></div>
<div class="a" style="left:741px;top:33px;width:12px;height:13px;background:#D9A20F"></div>
<div class="a" style="left:733px;top:93px;width:3px;height:86px;background:#4A6A9A"></div>
<div class="a" style="left:738px;top:94px;width:17px;height:2px;background:#D9A20F"></div>
<div class="a" style="left:738px;top:136px;width:17px;height:2px;background:#858474"></div>
<div class="a" style="left:733px;top:263px;width:3px;height:128px;background:#4B7354"></div>
<div class="a" style="left:738px;top:263px;width:17px;height:2px;background:#D9A20F"></div>
<div class="a" style="left:733px;top:433px;width:3px;height:42px;background:#4A6A9A"></div>
<div class="a" style="left:738px;top:433px;width:17px;height:2px;background:#D9A20F"></div>
<div class="a" style="left:738px;top:455px;width:17px;height:2px;background:#D9A20F"></div>
<div class="a" style="left:738px;top:457px;width:17px;height:40px;background:#8C7F5E"></div>
<div class="a" style="left:0;top:898px;width:756px;height:30px;background:#313335;border-top:1px solid #393B3D"></div>

<div class="a" style="left:110px;top:0;width:172px;height:31px;background:#4F5357"></div>
<div class="a" style="left:110px;top:27px;width:172px;height:3px;background:#4A7886"></div>
<svg class="a" style="left:11px;top:7px" width="19" height="19" viewBox="0 0 19 19"><circle cx="9" cy="9" r="8.5" fill="#D09E48"/><circle cx="9" cy="9" r="3.5" fill="none" stroke="#2E2E2E" stroke-width="1.2" opacity=".6"/><path d="M8 8h10.5L14 12.5 18.5 19H8z" fill="#2B2B2B" opacity=".7"/><path d="M9 9h8.5l-4.3 4.2 4.3 4.3H9z" fill="url(#kg)"/><path d="M9 17.5l4.2-4.3 4.3 4.3z" fill="#3D9FDD"/></svg>
<div class="t" style="left:34px;top:9px;color:#BBBBBB;transform-origin:0 0;transform:scaleX(0.943)">Enter.kt</div>
<svg class="a cx" style="left:91px;top:12px" width="10" height="10" viewBox="0 0 10 10"><path d="M1 1l8 8M9 1L1 9" stroke="#6C6E70" stroke-width="1.3"/></svg>
<svg class="a" style="left:123px;top:7px" width="19" height="19" viewBox="0 0 19 19"><path d="M1 5L5 1h5v17H1z" fill="#9AA7B0"/><path d="M6 1v5H1" fill="none" stroke="#4E5254" stroke-width="0.8"/><path d="M8 8h10.5L14 12.5 18.5 19H8z" fill="#2B2B2B" opacity=".7"/><path d="M9 9h8.5l-4.3 4.2 4.3 4.3H9z" fill="url(#kg)"/><path d="M9 17.5l4.2-4.3 4.3 4.3z" fill="#3D9FDD"/></svg>
<div class="t" style="left:145px;top:9px;color:#6897BB">ExampleKotlin.kt</div>
<svg class="a cx" style="left:263px;top:12px" width="10" height="10" viewBox="0 0 10 10"><path d="M1 1l8 8M9 1L1 9" stroke="#7A7C7E" stroke-width="1.3"/></svg>
<svg class="a" style="left:189px;top:422px;z-index:3" width="9" height="18" viewBox="0 0 9 18"><path d="M1 1.5h3M5 1.5h3M4.5 1.5v15M1 16.5h3M5 16.5h3" stroke="#000" stroke-width="1.3" fill="none"/></svg>
<div class="t" style="left:81px;top:907px;color:#BBBBBB">ExampleKotlin1</div>
<svg class="a" style="left:197px;top:909px" width="6" height="10" viewBox="0 0 6 10"><path d="M1 1l4 4-4 4" fill="none" stroke="#6E7073" stroke-width="1.2"/></svg>
<div class="t" style="left:215px;top:907px;color:#BBBBBB">ExampleKotlin1()</div>

</div>
<div id="ed2" class="a">
<div class="a" style="left:0;top:0;width:757px;height:31px;background:#3E3F41;border-top:1px solid #4B4C4E;border-bottom:1px solid #4B4C4E"></div>
<div class="a" style="left:0;top:31px;width:70px;height:867px;background:#313335"></div>
<div class="a" style="left:70px;top:243.2px;width:663px;height:21.2px;background:#323232"></div>
<div class="a" style="left:70px;top:31px;width:1px;height:867px;background:#555555"></div>
<div class="a" style="left:60px;top:137.2px;width:10px;height:21.2px;background:#384C38"></div>
<div class="a" style="left:60px;top:200.8px;width:10px;height:21.2px;background:#36495C"></div>
<div class="a" style="left:60px;top:243.2px;width:10px;height:148.4px;background:#384C38"></div>
<div class="ln" style="top:31.2px;width:24px">1</div>
<div class="ln" style="top:52.4px;width:24px">2</div>
<div class="ln" style="top:73.6px;width:24px">3</div>
<div class="ln" style="top:94.8px;width:24px">4</div>
<div class="ln" style="top:116.0px;width:24px">5</div>
<div class="ln" style="top:137.2px;width:24px">6</div>
<div class="ln" style="top:158.4px;width:24px">7</div>
<div class="ln" style="top:179.6px;width:24px">8</div>
<div class="ln" style="top:200.8px;width:24px">9</div>
<div class="ln" style="top:222.0px;width:24px">10</div>
<div class="ln" style="top:243.2px;width:24px">11</div>
<div class="ln" style="top:264.4px;width:24px">12</div>
<div class="ln" style="top:285.6px;width:24px">13</div>
<div class="ln" style="top:306.8px;width:24px">14</div>
<div class="ln" style="top:328.0px;width:24px">15</div>
<div class="ln" style="top:349.2px;width:24px">16</div>
<div class="ln" style="top:370.4px;width:24px">17</div>
<div class="ln" style="top:391.6px;width:24px">18</div>
<div class="ln" style="top:412.8px;width:24px">19</div>
<div class="a" style="left:115px;top:200.8px;width:1px;height:21.2px;background:#393939"></div>
<div class="a" style="left:115px;top:285.6px;width:1px;height:42.4px;background:#393939"></div>
<svg class="a" style="left:64px;top:185.1px" width="12" height="15" viewBox="0 0 12 15"><path d="M0.5 0.5h11v8l-5.5 5.5-5.5-5.5z" fill="#313335" stroke="#5F5F5F" stroke-width="1"/><path d="M3.5 5h5" stroke="#5F5F5F" stroke-width="1"/></svg>
<svg class="a" style="left:64px;top:224.5px" width="12" height="15" viewBox="0 0 12 15"><path d="M0.5 14.5h11v-8l-5.5-5.5-5.5 5.5z" fill="#313335" stroke="#5F5F5F" stroke-width="1"/><path d="M3.5 10h5" stroke="#5F5F5F" stroke-width="1"/></svg>
<svg class="a" style="left:64px;top:269.9px" width="12" height="15" viewBox="0 0 12 15"><path d="M0.5 0.5h11v8l-5.5 5.5-5.5-5.5z" fill="#313335" stroke="#5F5F5F" stroke-width="1"/><path d="M3.5 5h5" stroke="#5F5F5F" stroke-width="1"/></svg>
<svg class="a" style="left:64px;top:330.5px" width="12" height="15" viewBox="0 0 12 15"><path d="M0.5 14.5h11v-8l-5.5-5.5-5.5 5.5z" fill="#313335" stroke="#5F5F5F" stroke-width="1"/><path d="M3.5 10h5" stroke="#5F5F5F" stroke-width="1"/></svg>
<svg class="a" style="left:196px;top:91.8px" width="100" height="3" viewBox="0 0 100 3"><polyline points="0,0 2,1.6 4,0 6,1.6 8,0 10,1.6 12,0 14,1.6 16,0 18,1.6 20,0 22,1.6 24,0 26,1.6 28,0 30,1.6 32,0 34,1.6 36,0 38,1.6 40,0 42,1.6 44,0 46,1.6 48,0 50,1.6 52,0 54,1.6 56,0 58,1.6 60,0 62,1.6 64,0 66,1.6 68,0 70,1.6 72,0 74,1.6 76,0 78,1.6 80,0 82,1.6 84,0 86,1.6 88,0 90,1.6 92,0 94,1.6 96,0 98,1.6" transform="translate(0 .6)" fill="none" stroke="#77787A" stroke-width="1"/></svg>
<svg class="a" style="left:223px;top:134.2px" width="55" height="3" viewBox="0 0 55 3"><polyline points="0,0 2,1.6 4,0 6,1.6 8,0 10,1.6 12,0 14,1.6 16,0 18,1.6 20,0 22,1.6 24,0 26,1.6 28,0 30,1.6 32,0 34,1.6 36,0 38,1.6 40,0 42,1.6 44,0 46,1.6 48,0 50,1.6 52,0 54,1.6" transform="translate(0 .6)" fill="none" stroke="#77787A" stroke-width="1"/></svg>
<div class="a" style="left:223px;top:116.0px;width:54px;height:20.4px;background:#45442F"></div>
<svg class="a" style="left:250px;top:155.4px" width="46" height="3" viewBox="0 0 46 3"><polyline points="0,0 2,1.6 4,0 6,1.6 8,0 10,1.6 12,0 14,1.6 16,0 18,1.6 20,0 22,1.6 24,0 26,1.6 28,0 30,1.6 32,0 34,1.6 36,0 38,1.6 40,0 42,1.6 44,0" transform="translate(0 .6)" fill="none" stroke="#77787A" stroke-width="1"/></svg>
<div class="a" style="left:250px;top:137.2px;width:45px;height:20.4px;background:#45442F"></div>
<svg class="a" style="left:178px;top:197.8px" width="100" height="3" viewBox="0 0 100 3"><polyline points="0,0 2,1.6 4,0 6,1.6 8,0 10,1.6 12,0 14,1.6 16,0 18,1.6 20,0 22,1.6 24,0 26,1.6 28,0 30,1.6 32,0 34,1.6 36,0 38,1.6 40,0 42,1.6 44,0 46,1.6 48,0 50,1.6 52,0 54,1.6 56,0 58,1.6 60,0 62,1.6 64,0 66,1.6 68,0 70,1.6 72,0 74,1.6 76,0 78,1.6 80,0 82,1.6 84,0 86,1.6 88,0 90,1.6 92,0 94,1.6 96,0 98,1.6" transform="translate(0 .6)" fill="none" stroke="#77787A" stroke-width="1"/></svg>
<svg class="a" style="left:322px;top:197.8px" width="55" height="3" viewBox="0 0 55 3"><polyline points="0,0 2,1.6 4,0 6,1.6 8,0 10,1.6 12,0 14,1.6 16,0 18,1.6 20,0 22,1.6 24,0 26,1.6 28,0 30,1.6 32,0 34,1.6 36,0 38,1.6 40,0 42,1.6 44,0 46,1.6 48,0 50,1.6 52,0 54,1.6" transform="translate(0 .6)" fill="none" stroke="#5E7A4E" stroke-width="1"/></svg>
<svg class="a" style="left:328.6px;top:219.0px" width="46" height="3" viewBox="0 0 46 3"><polyline points="0,0 2,1.6 4,0 6,1.6 8,0 10,1.6 12,0 14,1.6 16,0 18,1.6 20,0 22,1.6 24,0 26,1.6 28,0 30,1.6 32,0 34,1.6 36,0 38,1.6 40,0 42,1.6 44,0" transform="translate(0 .6)" fill="none" stroke="#5E7A4E" stroke-width="1"/></svg>
<div class="a" style="left:115px;top:264.4px;width:54px;height:21.2px;background:#4F4630"></div>
<svg class="a" style="left:322px;top:282.6px" width="55" height="3" viewBox="0 0 55 3"><polyline points="0,0 2,1.6 4,0 6,1.6 8,0 10,1.6 12,0 14,1.6 16,0 18,1.6 20,0 22,1.6 24,0 26,1.6 28,0 30,1.6 32,0 34,1.6 36,0 38,1.6 40,0 42,1.6 44,0 46,1.6 48,0 50,1.6 52,0 54,1.6" transform="translate(0 .6)" fill="none" stroke="#5E7A4E" stroke-width="1"/></svg>
<svg class="a" style="left:457px;top:282.6px" width="46" height="3" viewBox="0 0 46 3"><polyline points="0,0 2,1.6 4,0 6,1.6 8,0 10,1.6 12,0 14,1.6 16,0 18,1.6 20,0 22,1.6 24,0 26,1.6 28,0 30,1.6 32,0 34,1.6 36,0 38,1.6 40,0 42,1.6 44,0" transform="translate(0 .6)" fill="none" stroke="#5E7A4E" stroke-width="1"/></svg>
<div class="cl" style="left:79px;top:31.2px"><span class="k">package</span><span class="d"> com.wrzosdev</span><span class="k">;</span></div>
<div class="cl" style="left:79px;top:73.6px"><span class="k">public class</span><span class="d"> </span><span class="g">ExampleJava</span><span class="d"> {</span></div>
<div class="cl" style="left:79px;top:116.0px"><span class="d">    </span><span class="k">private int</span><span class="d"> </span><span class="g">liczba</span><span class="k">;</span></div>
<div class="cl" style="left:79px;top:137.2px"><span class="d">    </span><span class="k">private</span><span class="d"> String </span><span class="g">tekst</span><span class="k">;</span></div>
<div class="cl" style="left:79px;top:179.6px"><span class="d">    </span><span class="k">public</span><span class="d"> </span><span class="g">ExampleJava</span><span class="d">(</span><span class="k">int</span><span class="d"> </span><span class="d">liczba</span><span class="d">){</span></div>
<div class="cl" style="left:79px;top:200.8px"><span class="d">        </span><span class="k">this</span><span class="d">(liczba</span><span class="k">,</span><span class="d"> </span><span class="hint" style="margin-left:3.5px;margin-right:5.6px;width:42.5px">tekst:</span><span class="s">"</span><span class="s">tekst</span><span class="s">"</span><span class="d">)</span><span class="k">;</span></div>
<div class="cl" style="left:79px;top:222.0px"><span class="d">    }</span></div>
<div class="cl" style="left:79px;top:264.4px"><span class="d">    </span><span class="k">public</span><span class="d"> </span><span class="y">ExampleJava</span><span class="d">(</span><span class="k">int</span><span class="d"> </span><span class="d">liczba</span><span class="k">,</span><span class="d"> String </span><span class="d">tekst</span><span class="d">){</span></div>
<div class="cl" style="left:79px;top:285.6px"><span class="d">        </span><span class="k">this</span><span class="d">.</span><span class="p">tekst</span><span class="d"> = tekst</span><span class="k">;</span></div>
<div class="cl" style="left:79px;top:306.8px"><span class="d">        </span><span class="k">this</span><span class="d">.</span><span class="p">liczba</span><span class="d"> = liczba</span><span class="k">;</span></div>
<div class="cl" style="left:79px;top:328.0px"><span class="d">    }</span></div>
<div class="cl" style="left:79px;top:391.6px"><span class="d">}</span></div>
<div class="a" style="left:742px;top:33px;width:13px;height:13px;background:#D9A20F"></div>
<div class="a" style="left:740px;top:94px;width:17px;height:2px;background:#D9A20F"></div>
<div class="a" style="left:740px;top:136px;width:17px;height:2px;background:#D9A20F"></div>
<div class="a" style="left:740px;top:157px;width:17px;height:2px;background:#D9A20F"></div>
<div class="a" style="left:735px;top:157px;width:3px;height:21px;background:#4B7354"></div>
<div class="a" style="left:740px;top:200px;width:17px;height:2px;background:#D9A20F"></div>
<div class="a" style="left:735px;top:221px;width:3px;height:21px;background:#4A6A9A"></div>
<div class="a" style="left:735px;top:263px;width:3px;height:150px;background:#4B7354"></div>
<div class="a" style="left:740px;top:285px;width:17px;height:2px;background:#D9A20F"></div>
<div class="a" style="left:0;top:898px;width:757px;height:30px;background:#313335;border-top:1px solid #393B3D"></div>

<div class="a" style="left:0;top:0;width:1px;height:928px;background:#4B4C4E;z-index:2"></div>
<div class="a" style="left:146px;top:0;width:177px;height:31px;background:#4F5357"></div>
<div class="a" style="left:146px;top:27px;width:177px;height:4px;background:#469BC2"></div>
<svg class="a" style="left:12px;top:7px" width="19" height="19" viewBox="0 0 19 19"><circle cx="9" cy="9" r="8.5" fill="#4590B5"/><path d="M11.6 6.7A3.3 3.3 0 1 0 11.6 11.3" fill="none" stroke="#0F4566" stroke-width="1.4"/></svg>
<div class="t" style="left:35px;top:9px;color:#BBBBBB;transform-origin:0 0;transform:scaleX(0.976)">EnterAlt.java</div>
<svg class="a cx" style="left:126px;top:12px" width="10" height="10" viewBox="0 0 10 10"><path d="M1 1l8 8M9 1L1 9" stroke="#6C6E70" stroke-width="1.3"/></svg>
<svg class="a" style="left:157px;top:7px" width="19" height="19" viewBox="0 0 19 19"><circle cx="9" cy="9" r="8.5" fill="#4590B5"/><path d="M11.6 6.7A3.3 3.3 0 1 0 11.6 11.3" fill="none" stroke="#0F4566" stroke-width="1.4"/></svg>
<div class="t" style="left:181px;top:9px;color:#6897BB;transform-origin:0 0;transform:scaleX(0.933)">ExampleJava.java</div>
<svg class="a cx" style="left:304px;top:12px" width="10" height="10" viewBox="0 0 10 10"><path d="M1 1l8 8M9 1L1 9" stroke="#7A7C7E" stroke-width="1.3"/></svg>
<div class="a" style="left:114px;top:243.2px;width:2px;height:21px;background:#BBBBBB"></div>
<div class="t" style="left:82px;top:907px;color:#BBBBBB">ExampleJava</div>

</div>
<!-- RIGHT STRIP -->
<div id="rstrip" class="a">
 <svg class="a" style="left:6px;top:11px" width="16" height="19" viewBox="0 0 16 19"><g fill="#B07EDB"><ellipse cx="8" cy="4" rx="2.5" ry="2.5"/><ellipse cx="8" cy="9" rx="3" ry="2.5"/><ellipse cx="8" cy="15" rx="3.5" ry="3.5"/></g><g stroke="#B07EDB" stroke-width="1.2"><path d="M5 8L1 6M11 8l4-2M4.5 11L0.5 11M11.5 11l4 0M5 14l-4 3M11 14l4 3M6 2L4 0M10 2l2-2"/></g></svg>
 <div class="t" style="left:21px;top:35px;transform-origin:0 0;transform:rotate(90deg);font-size:13px;color:#BBBBBB">Ant Build</div>
 <svg class="a" style="left:5px;top:118px" width="18" height="14" viewBox="0 0 18 14"><text x="0" y="13" font-family="Liberation Sans" font-style="italic" font-weight="bold" font-size="17" fill="#3D9FDD">m</text></svg>
 <div class="t" style="left:21px;top:140px;transform-origin:0 0;transform:rotate(90deg);font-size:13px;color:#BBBBBB">Maven Projects</div>
</div>
<!-- BOTTOM TOOL BAR -->
<div id="bbar" class="a">
 <svg class="a" style="left:39px;top:5px" width="17" height="19" viewBox="0 0 17 19"><path d="M4 17h10v2H4z" fill="#3D80B8"/><ellipse cx="9" cy="12" rx="5" ry="4.5" fill="#E8A858"/><path d="M4 10a5 5 0 0 1 10 0z" fill="#8E9092"/><circle cx="5" cy="5" r="4.2" fill="#D9D9D9"/><path d="M3 4.5h4M3 6h4" stroke="#8E9092" stroke-width=".8"/><circle cx="7.5" cy="12" r=".7" fill="#5A3E1C"/><circle cx="10.5" cy="12" r=".7" fill="#5A3E1C"/></svg>
 <div class="t bt" style="left:61px"><u>6</u>: TODO</div>
 <svg class="a" style="left:142px;top:6px" width="17" height="17" viewBox="0 0 17 17"><circle cx="3.5" cy="3.5" r="3.2" fill="#389FD6"/><circle cx="13.5" cy="3.5" r="3" fill="#9AA7B0"/><circle cx="8.5" cy="13.5" r="3" fill="#9AA7B0"/><path d="M3.5 3.5l5 10 5-10" stroke="#9AA7B0" stroke-width="2" fill="none"/></svg>
 <div class="t bt" style="left:164px"><u>9</u>: Version Control</div>
 <svg class="a" style="left:305px;top:7px" width="16" height="15" viewBox="0 0 16 15"><rect x="0" y="0" width="16" height="15" fill="#000"/><rect x="0" y="0" width="16" height="2" fill="#9AA7B0"/><path d="M3 5l3 2.5L3 10" stroke="#fff" stroke-width="1.2" fill="none"/><path d="M7 11h5" stroke="#fff" stroke-width="1.2"/></svg>
 <div class="t bt" style="left:326px">Terminal</div>
 <svg class="a" style="left:1795px;top:6px" width="20" height="18" viewBox="0 0 20 18"><path d="M10 1C5 1 1.5 4 1.5 8s3.5 7 8.5 7c1 0 2-.2 2.8-.4L16 17v-3.5c1.7-1.3 2.5-3.2 2.5-5.5C18.5 4 15 1 10 1z" fill="none" stroke="#AFB1B3" stroke-width="1.3"/></svg>
 <div class="t bt" style="left:1820px">Event Log</div>
</div>
<!-- STATUS BAR -->
<div id="sbar" class="a">
 <div class="a" style="left:11px;top:5px;width:18px;height:15px;border:2px solid #A0A0A0;background:#555"></div>
 <div class="a" style="left:11px;top:21px;width:18px;height:1px;background:#8A8A8A"></div>
 <div class="t st" style="left:39px">2 files committed: 7.1 - Klasy i konstruktory pierwotne (15 minutes ago)</div>
 <div class="t st" style="left:1607px;transform-origin:0 0;transform:scaleX(0.89)">11:5</div>
 <div class="t st" style="left:1648px;transform-origin:0 0;transform:scaleX(0.8)">CRLF</div>
 <svg class="a" style="left:1682px;top:8px" width="7" height="12" viewBox="0 0 7 12"><path d="M0 5L3.5 0 7 5zM0 7h7L3.5 12z" fill="#AFB1B3"/></svg>
 <div class="t st" style="left:1703px;transform-origin:0 0;transform:scaleX(0.9)">UTF-8</div>
 <svg class="a" style="left:1744px;top:8px" width="7" height="12" viewBox="0 0 7 12"><path d="M0 5L3.5 0 7 5zM0 7h7L3.5 12z" fill="#AFB1B3"/></svg>
 <div class="t st" style="left:1768px;transform-origin:0 0;transform:scaleX(0.96)">Git: master</div>
 <svg class="a" style="left:1844px;top:8px" width="7" height="12" viewBox="0 0 7 12"><path d="M0 5L3.5 0 7 5zM0 7h7L3.5 12z" fill="#AFB1B3"/></svg>
 <svg class="a" style="left:1866px;top:5px" width="12" height="15" viewBox="0 0 12 15"><path d="M2 7V4a3 3 0 0 1 6 0" fill="none" stroke="#AFB1B3" stroke-width="1.4"/><rect x="1" y="7" width="10" height="7" fill="#AFB1B3"/><rect x="5" y="9" width="2" height="3" fill="#3E3F41"/></svg>
 <svg class="a" style="left:1894px;top:3px" width="16" height="20" viewBox="0 0 16 20"><path d="M3 2h10v5H3z" fill="none" stroke="#AFB1B3" stroke-width="1.3"/><path d="M1 7h14" stroke="#AFB1B3" stroke-width="1.5"/><circle cx="8" cy="11" r="4" fill="none" stroke="#AFB1B3" stroke-width="1.3"/><path d="M2 19c0-3 3-4 6-4s6 1 6 4" fill="none" stroke="#AFB1B3" stroke-width="1.3"/></svg>
 <div class="a" style="left:0;top:23px;width:1920px;height:3px;background:#1E5A26"></div>
</div>

</body></html>
